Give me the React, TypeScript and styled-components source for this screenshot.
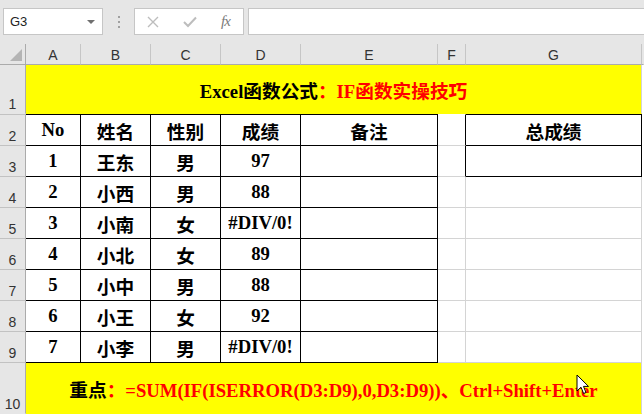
import React from "react";
import styled, { createGlobalStyle } from "styled-components";

const GRID = "#d4d4d4";
const BLACK = "#000";
const YELLOW = "#ffff00";
const RED = "#ff0000";
const HEAD_BG = "#e6e6e6";
const HEAD_LINE = "#ababab";
const HEAD_SEP = "#c6c6c6";

const Global = createGlobalStyle`
  html, body { margin: 0; padding: 0; background: #fff; }
  body { width: 644px; height: 414px; overflow: hidden; font-family: "Liberation Sans", Arial, sans-serif; }
`;

const Page = styled.div`
  position: relative;
  width: 644px;
  height: 414px;
  overflow: hidden;
  background: #fff;
`;

const TopBar = styled.div`
  height: 44px;
  box-sizing: border-box;
  background: ${HEAD_BG};
  display: flex;
  align-items: flex-start;
  padding: 8px 0 0 3px;
`;

const NameBox = styled.div`
  width: 100px;
  height: 27px;
  box-sizing: border-box;
  border: 1px solid ${HEAD_SEP};
  background: #fff;
  display: flex;
  align-items: center;
  justify-content: space-between;
  padding: 0 6px 0 6px;
  font-family: "Liberation Sans", Arial, sans-serif;
  font-size: 13px;
  color: #222;
`;

const DropArrow = styled.span`
  width: 0;
  height: 0;
  border-left: 4px solid transparent;
  border-right: 4px solid transparent;
  border-top: 4px solid #6f6f6f;
  margin-right: 1px;
`;

const Dots = styled.div`
  width: 31px;
  height: 27px;
  display: flex;
  flex-direction: column;
  align-items: center;
  justify-content: center;
  gap: 3px;
  span {
    width: 2px;
    height: 2px;
    background: #a0a0a0;
  }
`;

const FxBox = styled.div`
  width: 110px;
  height: 27px;
  box-sizing: border-box;
  border: 1px solid ${HEAD_SEP};
  background: #fff;
  display: flex;
  align-items: center;
  padding-left: 12px;
  gap: 24px;
`;

const FxText = styled.span`
  font-family: "Liberation Serif", "Times New Roman", serif;
  font-style: italic;
  font-size: 15px;
  color: #7a7a7a;
  letter-spacing: -1px;
  margin-left: 0px;
`;

const FormulaInput = styled.div`
  flex: 1;
  height: 27px;
  box-sizing: border-box;
  border: 1px solid ${HEAD_SEP};
  border-right: none;
  background: #fff;
  margin-left: 4px;
`;

const COLS = "26px 55px 70px 70px 80px 137px 28px 176px";

const ColHeader = styled.div`
  display: grid;
  grid-template-columns: ${COLS} 1fr;
  height: 21px;
  background: ${HEAD_BG};
`;

const ColCell = styled.div<{ $sep?: boolean }>`
  box-sizing: border-box;
  border-bottom: 1px solid ${HEAD_LINE};
  border-right: 1px solid ${(p) => (p.$sep === false ? "transparent" : HEAD_SEP)};
  display: flex;
  align-items: flex-end;
  justify-content: center;
  padding-bottom: 1px;
  font-family: "Liberation Sans", Arial, sans-serif;
  font-size: 14px;
  color: #333;
  position: relative;
`;

const SelectAll = styled.div`
  box-sizing: border-box;
  border-bottom: 1px solid ${HEAD_LINE};
  border-right: 1px solid ${HEAD_LINE};
  display: flex;
  align-items: flex-end;
  justify-content: flex-end;
  padding: 0 3px 3px 0;
  &::after {
    content: "";
    width: 0;
    height: 0;
    border-left: 12px solid transparent;
    border-bottom: 12px solid #b4b4b4;
  }
`;

const Sheet = styled.div`
  display: grid;
  width: 642px;
  grid-template-columns: ${COLS};
  grid-template-rows: 49px 32px repeat(7, 31px) 51px;
`;

const RowHead = styled.div<{ $top?: boolean; $last?: boolean }>`
  box-sizing: border-box;
  background: ${HEAD_BG};
  border-right: 1px solid ${HEAD_LINE};
  border-bottom: 1px solid ${(p) => (p.$last ? "transparent" : "#c2c2c2")};
  ${(p) => (p.$top ? "border-top: 1px solid #c2c2c2;" : "")}
  display: flex;
  align-items: flex-end;
  justify-content: center;
  padding-bottom: 1px;
  font-family: "Liberation Sans", Arial, sans-serif;
  font-size: 14px;
  color: #333;
`;

const Cell = styled.div<{ $r?: string; $b?: string; $t?: string; $bg?: string; $span?: number }>`
  box-sizing: border-box;
  grid-column: span ${(p) => p.$span ?? 1};
  background: ${(p) => p.$bg ?? "#fff"};
  border-right: 1px solid ${(p) => p.$r ?? GRID};
  border-bottom: 1px solid ${(p) => p.$b ?? GRID};
  ${(p) => (p.$t ? `border-top: 1px solid ${p.$t};` : "")}
  display: flex;
  align-items: center;
  justify-content: center;
  white-space: nowrap;
  font-family: "Liberation Serif", "Times New Roman", "Noto Sans CJK SC", serif;
  font-weight: 700;
  font-size: 18.67px;
  color: #000;
`;

const Red = styled.span`
  color: ${RED};
`;

const Cursor = styled.svg`
  position: absolute;
  left: 576px;
  top: 374px;
`;

const cols = ["A", "B", "C", "D", "E", "F", "G"];

const rows: [string, string, string, string][] = [
  ["1", "王东", "男", "97"],
  ["2", "小西", "男", "88"],
  ["3", "小南", "女", "#DIV/0!"],
  ["4", "小北", "女", "89"],
  ["5", "小中", "男", "88"],
  ["6", "小王", "女", "92"],
  ["7", "小李", "男", "#DIV/0!"],
];

export default function App() {
  return (
    <Page>
      <Global />
      <TopBar>
        <NameBox>
          G3
          <DropArrow />
        </NameBox>
        <Dots>
          <span />
          <span />
          <span />
        </Dots>
        <FxBox>
          <svg width="12" height="12" viewBox="0 0 12 12">
            <path d="M1 1 L11 11 M11 1 L1 11" stroke="#bdbdbd" strokeWidth="1.4" fill="none" />
          </svg>
          <svg width="14" height="12" viewBox="0 0 14 12">
            <path d="M1 6 L5 10 L13 1.5" stroke="#bdbdbd" strokeWidth="2" fill="none" />
          </svg>
          <FxText>fx</FxText>
        </FxBox>
        <FormulaInput />
      </TopBar>

      <ColHeader>
        <SelectAll />
        {cols.map((c) => (
          <ColCell key={c}>{c}</ColCell>
        ))}
        <ColCell $sep={false} />
      </ColHeader>

      <Sheet>
        <RowHead $last>1</RowHead>
        <Cell $span={7} $bg={YELLOW} $b="transparent">
          Excel函数公式<Red>：IF函数实操技巧</Red>
        </Cell>

        <RowHead $top>2</RowHead>
        <Cell $t={BLACK} $r={BLACK} $b={BLACK}>No</Cell>
        <Cell $t={BLACK} $r={BLACK} $b={BLACK}>姓名</Cell>
        <Cell $t={BLACK} $r={BLACK} $b={BLACK}>性别</Cell>
        <Cell $t={BLACK} $r={BLACK} $b={BLACK}>成绩</Cell>
        <Cell $t={BLACK} $r={BLACK} $b={BLACK}>备注</Cell>
        <Cell $t="transparent" $r={BLACK} />
        <Cell $t={BLACK} $r={BLACK} $b={BLACK}>总成绩</Cell>

        {rows.map((r, i) => (
          <React.Fragment key={r[0]}>
            <RowHead>{i + 3}</RowHead>
            <Cell $r={BLACK} $b={BLACK}>{r[0]}</Cell>
            <Cell $r={BLACK} $b={BLACK}>{r[1]}</Cell>
            <Cell $r={BLACK} $b={BLACK}>{r[2]}</Cell>
            <Cell $r={BLACK} $b={BLACK}>{r[3]}</Cell>
            <Cell $r={BLACK} $b={BLACK} />
            <Cell $r={i === 0 ? BLACK : GRID} />
            <Cell $r={i === 0 ? BLACK : GRID} $b={i === 0 ? BLACK : GRID} />
          </React.Fragment>
        ))}

        <RowHead $last>10</RowHead>
        <Cell $span={7} $bg={YELLOW} $b="transparent">
          重点<Red>：=SUM(IF(ISERROR(D3:D9),0,D3:D9))、Ctrl+Shift+Enter</Red>
        </Cell>
      </Sheet>

      <Cursor width="14" height="22" viewBox="0 0 14 22">
        <path
          d="M1 1 L1 17 L5 13.2 L7.6 19.5 L10 18.5 L7.5 12.4 L12.5 12.4 Z"
          fill="#fff"
          stroke="#000"
          strokeWidth="1"
          strokeLinejoin="round"
        />
      </Cursor>
    </Page>
  );
}
